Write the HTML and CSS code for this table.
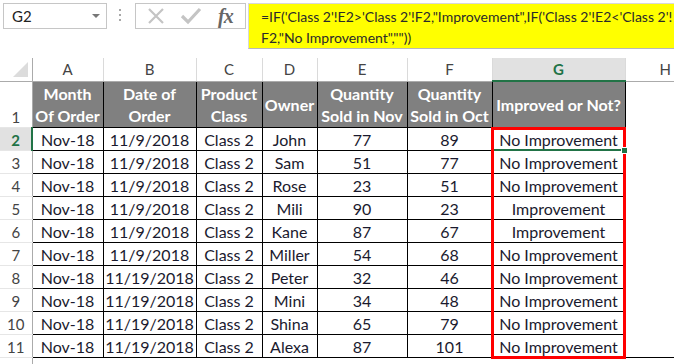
FILE: index.html
```html
<!DOCTYPE html>
<html>
<head>
<meta charset="utf-8">
<link rel="stylesheet" href="styles.css">
</head>
<body>
<div class="bar">
  <div class="namebox"><span>G2</span><span class="caret"></span></div>
  <div class="dots"><i></i><i></i><i></i></div>
  <div class="btns">
    <svg class="ico" width="20" height="20" viewBox="0 0 20 20"><path d="M3 3 L17 17 M17 3 L3 17" stroke="#c4c4c4" stroke-width="2.2" fill="none"/></svg>
    <svg class="ico" width="22" height="20" viewBox="0 0 22 20"><path d="M2 10 L8 16 L20 3" stroke="#c4c4c4" stroke-width="3.2" fill="none"/></svg>
    <span class="fx">fx</span>
  </div>
  <div class="formula">=IF('Class 2'!E2&gt;'Class 2'!F2,"Improvement",IF('Class 2'!E2&lt;'Class 2'!<br>F2,"No Improvement",""))</div>
</div>
<div class="sheetwrap">
<table class="sheet">
  <colgroup>
    <col class="c-rh"><col class="c-a"><col class="c-b"><col class="c-c"><col class="c-d"><col class="c-e"><col class="c-f"><col class="c-g"><col class="c-h">
  </colgroup>
  <tr class="colhead">
    <th class="corner"><span class="tri"></span></th><th>A</th><th>B</th><th>C</th><th>D</th><th>E</th><th>F</th><th class="act">G</th><th class="last">H</th>
  </tr>
  <tr class="r1">
    <td class="rh">1</td>
    <td class="hd">Month<br>Of Order</td>
    <td class="hd">Date of<br>Order</td>
    <td class="hd">Product<br>Class</td>
    <td class="hd">Owner</td>
    <td class="hd">Quantity<br>Sold in Nov</td>
    <td class="hd">Quantity<br>Sold in Oct</td>
    <td class="hd">Improved or Not?</td>
    <td class="empty"></td>
  </tr>
  <tr><td class="rh act">2</td><td>Nov-18</td><td>11/9/2018</td><td>Class 2</td><td>John</td><td>77</td><td>89</td><td>No Improvement</td><td class="empty"></td></tr>
  <tr><td class="rh">3</td><td>Nov-18</td><td>11/9/2018</td><td>Class 2</td><td>Sam</td><td>51</td><td>77</td><td>No Improvement</td><td class="empty"></td></tr>
  <tr><td class="rh">4</td><td>Nov-18</td><td>11/9/2018</td><td>Class 2</td><td>Rose</td><td>23</td><td>51</td><td>No Improvement</td><td class="empty"></td></tr>
  <tr><td class="rh">5</td><td>Nov-18</td><td>11/9/2018</td><td>Class 2</td><td>Mili</td><td>90</td><td>23</td><td>Improvement</td><td class="empty"></td></tr>
  <tr><td class="rh">6</td><td>Nov-18</td><td>11/9/2018</td><td>Class 2</td><td>Kane</td><td>87</td><td>67</td><td>Improvement</td><td class="empty"></td></tr>
  <tr><td class="rh">7</td><td>Nov-18</td><td>11/9/2018</td><td>Class 2</td><td>Miller</td><td>54</td><td>68</td><td>No Improvement</td><td class="empty"></td></tr>
  <tr><td class="rh">8</td><td>Nov-18</td><td>11/19/2018</td><td>Class 2</td><td>Peter</td><td>32</td><td>46</td><td>No Improvement</td><td class="empty"></td></tr>
  <tr><td class="rh">9</td><td>Nov-18</td><td>11/19/2018</td><td>Class 2</td><td>Mini</td><td>34</td><td>48</td><td>No Improvement</td><td class="empty"></td></tr>
  <tr><td class="rh">10</td><td>Nov-18</td><td>11/19/2018</td><td>Class 2</td><td>Shina</td><td>65</td><td>79</td><td>No Improvement</td><td class="empty"></td></tr>
  <tr><td class="rh">11</td><td>Nov-18</td><td>11/19/2018</td><td>Class 2</td><td>Alexa</td><td>87</td><td>101</td><td>No Improvement</td><td class="empty"></td></tr>
  <tr class="rlast"><td class="rh"></td><td class="empty" colspan="8"></td></tr>
</table>
<div class="redbox"></div>
<div class="selline"></div>
<div class="handle"></div>
</div>
</body>
</html>
```
FILE: styles.css
```css
html, body {
  margin: 0;
  padding: 0;
  background: #fff;
  overflow: hidden;
  width: 674px;
  height: 364px;
}
body {
  font-family: Lato, "Liberation Sans", sans-serif;
  color: #1a1a2e;
}
.bar {
  height: 58px;
  position: relative;
}
.namebox {
  position: absolute;
  left: 3px;
  top: 3px;
  height: 24px;
  border: 1px solid #c6c6c6;
  display: flex;
  align-items: center;
  justify-content: space-between;
  padding: 0 6px 0 8px;
  box-sizing: content-box;
  width: 88px;
  font-size: 15px;
  color: #222;
}
.caret {
  width: 0;
  height: 0;
  border-left: 4px solid transparent;
  border-right: 4px solid transparent;
  border-top: 4px solid #777;
}
.dots {
  position: absolute;
  left: 119px;
  top: 9px;
  display: flex;
  flex-direction: column;
  gap: 3px;
}
.dots i {
  display: block;
  width: 2px;
  height: 2px;
  background: #a8a8a8;
}
.btns {
  position: absolute;
  left: 135px;
  top: 3px;
  width: 99px;
  height: 24px;
  border: 1px solid #c6c6c6;
  display: flex;
  align-items: center;
  padding-left: 10px;
  box-sizing: content-box;
  gap: 14px;
}
.ico { display: block; }
.fx {
  font-family: "Liberation Serif", serif;
  font-style: italic;
  font-weight: bold;
  font-size: 20px;
  color: #666;
  margin-left: 2px;
  letter-spacing: -1px;
}
.formula {
  position: absolute;
  left: 248px;
  top: 3px;
  right: 0;
  background: #ffff00;
  border-bottom: 1px solid #b8b8b8;
  border-top: 1px solid #d8d8d8;
  border-left: 1px solid #d8d8d8;
  padding: 2px 0 0 12px;
  font-size: 14px;
  line-height: 21px;
  color: #2a2a2a;
  white-space: nowrap;
  box-sizing: border-box;
  height: 46px;
}
.sheetwrap {
  position: relative;
}
.sheet {
  border-collapse: collapse;
  table-layout: fixed;
  width: 705px;
  font-size: 16px;
}
.c-rh { width: 32px; }
.c-a { width: 71px; }
.c-b { width: 93px; }
.c-c { width: 66px; }
.c-d { width: 55px; }
.c-e { width: 90px; }
.c-f { width: 85px; }
.c-g { width: 133px; }
.c-h { width: 80px; }
.sheet td, .sheet th {
  padding: 0;
  text-align: center;
  white-space: nowrap;
  overflow: hidden;
}
.colhead th {
  height: 22px;
  font-weight: normal;
  font-size: 15px;
  color: #444;
  border-right: 1px solid #dadada;
  border-bottom: 1px solid #ababab;
  line-height: 22px;
}
.colhead th.act {
  background: #e1e1e1;
  color: #217346;
  font-weight: bold;
  border-bottom: 2px solid #217346;
}
.colhead th.last { border-right: none; }
.colhead th.corner {
  position: relative;
  border-right: 1px solid #ababab;
}
.tri {
  position: absolute;
  right: 4px;
  bottom: 4px;
  width: 0;
  height: 0;
  border-left: 15px solid transparent;
  border-bottom: 15px solid #dcdcdc;
}
.sheet tr td {
  height: 22px;
  border: 1px solid #000;
  vertical-align: bottom;
  line-height: 20px;
}
.sheet td.rh {
  border: none;
  border-right: 1px solid #ababab;
  border-bottom: 1px solid #e6e6e6;
  color: #444;
  font-size: 15px;
}
.sheet td.rh.act {
  background: #e1e1e1;
  color: #217346;
  font-weight: bold;
  border-right: 2px solid #217346;
}
.sheet td.empty {
  border: none;
  border-left: 1px solid #000;
}
.r1 td { height: 45px; }
.r1 td.hd {
  background: #808080;
  color: #fff;
  font-weight: bold;
  vertical-align: middle;
  line-height: 22px;
  padding-top: 1px;
}
.rlast td { height: 10px; border: none; }
.rlast td.empty { border-left: none; border-top: 1px solid #000; }
.redbox {
  position: absolute;
  left: 491px;
  top: 69px;
  width: 135px;
  height: 232px;
  border: 3px solid #ff0000;
  box-sizing: border-box;
}
.selline {
  position: absolute;
  left: 494px;
  top: 91px;
  width: 127px;
  height: 2px;
  background: #217346;
}
.handle {
  position: absolute;
  left: 621px;
  top: 89px;
  width: 5px;
  height: 5px;
  background: #217346;
  border: 1px solid #fff;
}
```
